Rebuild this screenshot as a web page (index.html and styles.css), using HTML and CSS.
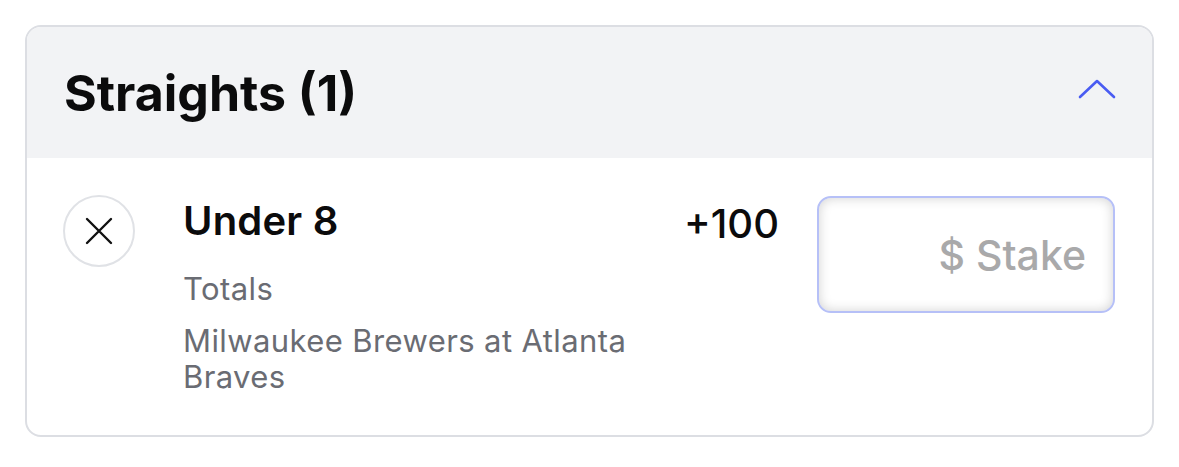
FILE: index.html
```html
<!DOCTYPE html>
<html>
<head>
<meta charset="utf-8">
<link rel="stylesheet" href="styles.css">
</head>
<body>
<section class="card">
  <header class="card-head">
    <h2 class="title">Straights (1)</h2>
    <svg class="chevron" width="38" height="20" viewBox="0 0 38 20"><path d="M2 18 L19 2 L36 18" fill="none" stroke="#4a5cf2" stroke-width="2.6" stroke-linecap="round" stroke-linejoin="round"/></svg>
  </header>
  <div class="bet">
    <button class="remove" aria-label="Remove">
      <svg width="28" height="28" viewBox="0 0 28 28"><path d="M2 2 L26 26 M26 2 L2 26" stroke="#111" stroke-width="2.4" stroke-linecap="round"/></svg>
    </button>
    <div class="info">
      <div class="sel">Under 8</div>
      <div class="market">Totals</div>
      <div class="event">Milwaukee Brewers at Atlanta Braves</div>
    </div>
    <div class="odds">+100</div>
    <div class="stake"><span class="ph">$ Stake</span></div>
  </div>
</section>
</body>
</html>
```

FILE: styles.css
```css
* { box-sizing: border-box; }
html, body { margin: 0; background: #fff; }
body {
  padding: 25px;
  font-family: Inter, "Noto Sans", sans-serif;
  color: #0b0b0c;
}
.card {
  width: 1129px;
  border: 2px solid #dcdee3;
  border-radius: 16px;
  overflow: hidden;
}
.card-head {
  height: 131px;
  background: #f2f3f5;
  display: flex;
  align-items: center;
  justify-content: space-between;
  padding: 0 36px 0 37px;
}
.title {
  margin: 0;
  font-size: 50px;
  font-weight: 700;
  line-height: 1;
}
.chevron { display: block; margin-top: -8px; }
.bet {
  display: flex;
  align-items: flex-start;
  padding: 37px 37px 40px 36px;
}
.remove {
  flex: none;
  width: 72px;
  height: 72px;
  border-radius: 50%;
  border: 2px solid #e0e2e6;
  background: #fff;
  display: flex;
  align-items: center;
  justify-content: center;
  padding: 0;
}
.remove svg { display: block; }
.info {
  margin-left: 48px;
  width: 470px;
  padding-top: 1px;
}
.sel {
  font-size: 40px;
  font-weight: 600;
  line-height: 50px;
  letter-spacing: 0.2px;
}
.market, .event {
  font-size: 31px;
  color: #6a6c73;
  line-height: 36px;
  letter-spacing: 0.4px;
}
.market { margin-top: 25px; }
.event { margin-top: 16px; }
.odds {
  margin-left: auto;
  font-size: 40px;
  font-weight: 500;
  line-height: 50px;
  padding-top: 4px;
  margin-right: 38px;
}
.stake {
  flex: none;
  width: 298px;
  height: 117px;
  border: 2.5px solid #b6c0f7;
  border-radius: 14px;
  box-shadow: inset 0 0 12px rgba(0,0,0,0.18);
  display: flex;
  align-items: center;
  justify-content: flex-end;
  padding-right: 27px;
  margin-top: 1px;
}
.ph {
  font-size: 41px;
  color: #a9a9aa;
  font-weight: 500;
}
```
